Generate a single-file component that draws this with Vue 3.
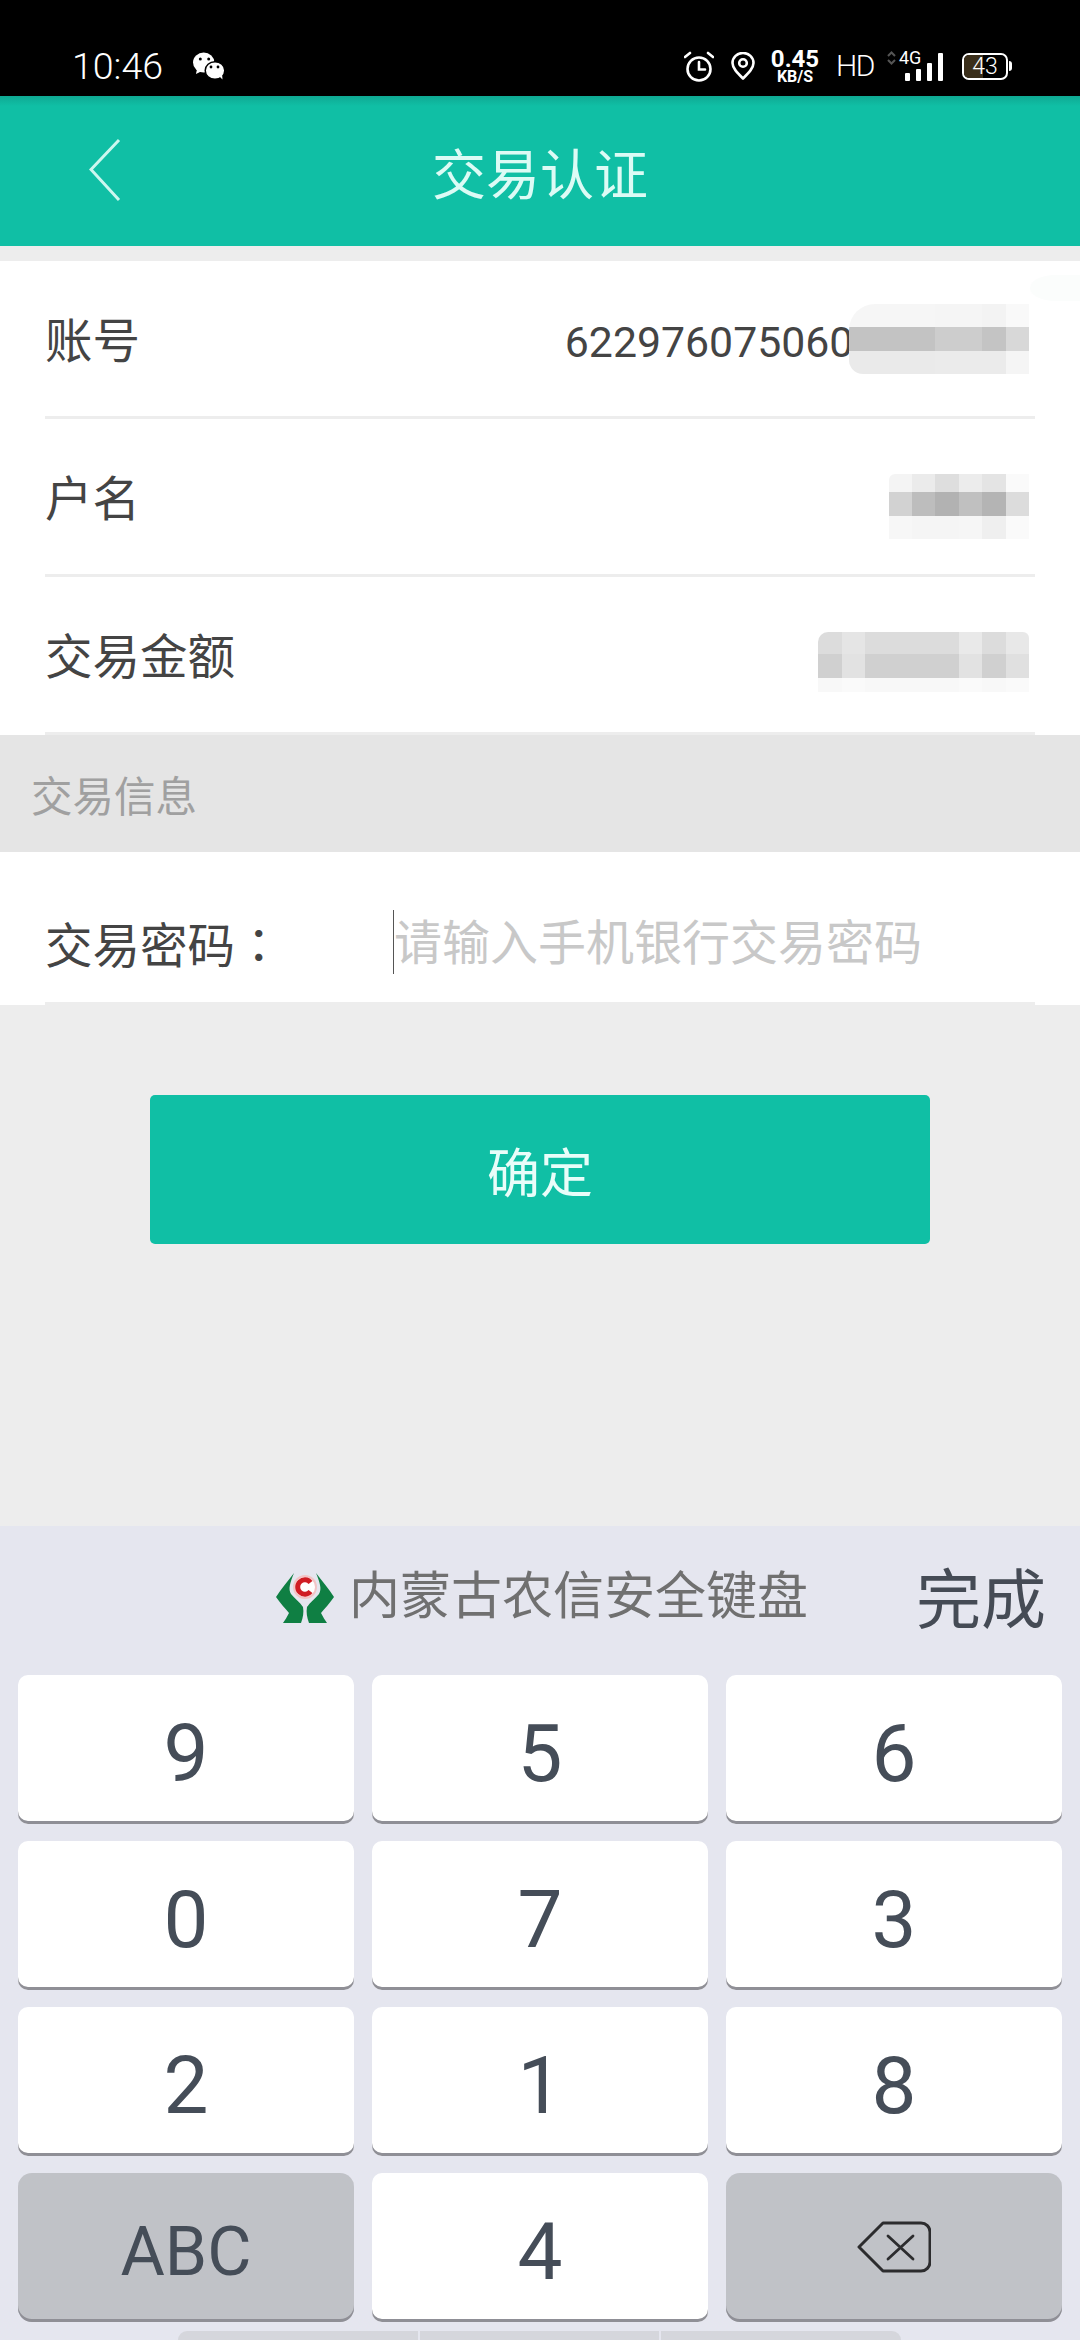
<template>
  <div class="page">
    <div class="status">
      <span class="time">10:46</span>
      <svg class="wechat" viewBox="0 0 32 28" width="32" height="28">
        <ellipse cx="10.700" cy="10.500" rx="10.700" ry="10" fill="#fff" />
        <path d="M4 17l-1 5 6-3z" fill="#fff" />
        <circle cx="7.300" cy="7" r="1.500" fill="#000" />
        <circle cx="15.700" cy="7" r="1.500" fill="#000" />
        <ellipse cx="22" cy="18.500" rx="9.800" ry="8.800" fill="#fff" stroke="#000" stroke-width="1.500" />
        <path d="M26 24l3.500 3.500-.5-6z" fill="#fff" />
        <circle cx="18" cy="15" r="1.400" fill="#000" />
        <circle cx="25" cy="15" r="1.400" fill="#000" />
      </svg>
      <div class="status-right">
        <svg viewBox="0 0 30 31" width="30" height="31" fill="none" stroke="#fff" stroke-width="2.600">
          <circle cx="15" cy="18" r="11.500" />
          <path d="M15 11v7.500h6M1 6l5-4M29 6l-5-4" stroke-linecap="round" />
        </svg>
        <svg class="pin" viewBox="0 0 24 28" width="24" height="28" fill="none" stroke="#fff" stroke-width="2.600">
          <path d="M12 26.500C6 20.500 1.500 16 1.500 11a10.500 10 0 0 1 21 0c0 5-4.500 9.500-10.500 15.500z" stroke-linejoin="round" />
          <circle cx="12" cy="11" r="3.800" />
        </svg>
        <div class="speed">
          <b>0.45</b>
          <b class="unit">KB/S</b>
        </div>
        <span class="hd">HD</span>
        <div class="signal">
          <svg class="arrows" viewBox="0 0 9 14" width="9" height="14" fill="none" stroke="#555" stroke-width="2">
            <path d="M1 5l3.500-3.500L8 5M1 9l3.500 3.500L8 9" />
          </svg>
          <span class="net">4G</span>
          <i v-for="b in bars" :key="b" class="bar" :style="{ height: b + 'px' }"></i>
        </div>
        <div class="battery">
          <div class="battery-fill"></div>
          <span>43</span>
        </div>
      </div>
    </div>

    <div class="header">
      <svg class="back" viewBox="0 0 32 64" width="32" height="64" fill="none" stroke="#ccf7ef" stroke-width="3">
        <path d="M30 2L2 31.500 30 62" />
      </svg>
      <span class="title">交易认证</span>
    </div>

    <div class="info">
      <div class="row">
        <span class="label">账号</span>
        <div class="value">
          <span class="account">622976075060</span>
          <div class="mosaic first">
            <i
              v-for="(cell, i) in mosaicOne"
              :key="i"
              :style="{ width: cell.w + 'px', background: 'linear-gradient(' + cell.c[0] + ' 0 33.300%,' + cell.c[1] + ' 33.300% 66.600%,' + cell.c[2] + ' 66.600%)' }"
            ></i>
          </div>
        </div>
        <div class="smudge"></div>
      </div>
      <div class="row">
        <span class="label">户名</span>
        <div class="value">
          <div class="mosaic second">
            <i
              v-for="(cell, i) in mosaicTwo"
              :key="i"
              :style="{ width: cell.w + 'px', background: 'linear-gradient(' + cell.c[0] + ' 0 28%,' + cell.c[1] + ' 28% 64%,' + cell.c[2] + ' 64%)' }"
            ></i>
          </div>
        </div>
      </div>
      <div class="row">
        <span class="label">交易金额</span>
        <div class="value">
          <div class="mosaic third">
            <i
              v-for="(cell, i) in mosaicThree"
              :key="i"
              :style="{ width: cell.w + 'px', background: 'linear-gradient(' + cell.c[0] + ' 0 37%,' + cell.c[1] + ' 37% 76%,' + cell.c[2] + ' 76%)' }"
            ></i>
          </div>
        </div>
      </div>
    </div>

    <div class="section">交易信息</div>

    <div class="password">
      <span class="label pwd-label">交易密码<span class="colon">：</span></span>
      <span class="caret"></span>
      <span class="placeholder">请输入手机银行交易密码</span>
    </div>

    <div class="confirm">确定</div>

    <div class="keyboard">
      <div class="kb-top">
        <svg class="logo" viewBox="0 0 58 50" width="58" height="50">
          <path d="M18 0C12 8 5 16 0 24c4 6 9 11 13 16-2 4-4 7-6 10h18c2-5 3-11 2-16-3-5-9-9-12-13-3-5-1-11 3-21z" fill="#0f7f43" />
          <path d="M40 0c6 8 13 16 18 24-4 6-9 11-13 16 2 4 4 7 6 10H33c-2-5-3-11-2-16 3-5 9-9 12-13 3-5 1-11-3-21z" fill="#0f7f43" />
          <circle cx="29" cy="14" r="12" fill="#f3c4c6" />
          <circle cx="29" cy="14" r="10" fill="#fff" />
          <path d="M34.500 9.500a7.200 7.200 0 1 0 0 9" fill="none" stroke="#d01c24" stroke-width="5" />
        </svg>
        <span class="kb-name">内蒙古农信安全键盘</span>
        <span class="done">完成</span>
      </div>
      <div class="keys">
        <div
          v-for="k in keys"
          :key="k"
          class="key"
          :class="{ special: k === 'ABC' || k === 'del', abc: k === 'ABC' }"
        >
          <svg v-if="k === 'del'" class="del" viewBox="0 0 74 52" width="74" height="52" fill="none" stroke="#2c2c2e" stroke-width="3">
            <path d="M26 2h38c5 0 9 4 9 9v30c0 5-4 9-9 9H26L2 26z" stroke-linejoin="round" />
            <path d="M31 15l25 23M56 15L31 38" stroke-width="2.800" stroke-linecap="round" />
          </svg>
          <template v-else>{{ k }}</template>
        </div>
      </div>
      <div class="nav-tabs">
        <i></i>
        <i></i>
        <i></i>
      </div>
    </div>
  </div>
</template>

<script setup>
const bars = [8, 12, 18, 28];
const keys = ["9", "5", "6", "0", "7", "3", "2", "1", "8", "ABC", "4", "del"];

// pixelated redaction blocks, each cell is one column (top, middle, bottom colour)
const mosaicOne = [
  { w: 86, c: ["#f6f6f6", "#c3c3c3", "#eaeaea"] },
  { w: 23.4, c: ["#f5f5f5", "#cdcdcd", "#ebebeb"] },
  { w: 23.4, c: ["#f5f5f5", "#cdcdcd", "#ebebeb"] },
  { w: 23.4, c: ["#f3f3f3", "#c4c4c4", "#ebebeb"] },
  { w: 23.4, c: ["#f9f9f9", "#d8d8d8", "#f5f5f5"] },
];
const mosaicTwo = [
  { w: 23.4, c: ["#f4f4f4", "#d2d2d2", "#f7f7f7"] },
  { w: 23.4, c: ["#ebebeb", "#bdbdbd", "#f5f5f5"] },
  { w: 23.4, c: ["#dedede", "#b2b2b2", "#f5f5f5"] },
  { w: 23.4, c: ["#ececec", "#c0c0c0", "#f6f6f6"] },
  { w: 23.4, c: ["#e4e4e4", "#b4b4b4", "#efefef"] },
  { w: 23.4, c: ["#fafafa", "#dcdcdc", "#fafafa"] },
];
const mosaicThree = [
  { w: 23.4, c: ["#dcdcdc", "#d0d0d0", "#f8f8f8"] },
  { w: 23.4, c: ["#e5e5e5", "#e2e2e2", "#fafafa"] },
  { w: 93.6, c: ["#dcdcdc", "#d0d0d0", "#f8f8f8"] },
  { w: 23.4, c: ["#e9e9e9", "#e2e2e2", "#fafafa"] },
  { w: 23.4, c: ["#dcdcdc", "#d0d0d0", "#f8f8f8"] },
  { w: 23.4, c: ["#e8e8e8", "#e0e0e0", "#fafafa"] },
];
</script>

<style>
html,
body {
  margin: 0;
  background: #ededed;
  overflow: hidden;
}
</style>

<style scoped>
.page {
  width: 1080px;
  height: 2340px;
  display: flex;
  flex-direction: column;
  background: #ededed;
  font-family: Roboto, "Noto Sans CJK SC", sans-serif;
  overflow: hidden;
}

.status {
  height: 96px;
  flex-shrink: 0;
  background: #000;
  color: #fff;
  display: flex;
  align-items: center;
  padding: 36px 69px 0 72px;
  box-sizing: border-box;
}

.time {
  font-size: 37.500px;
  font-weight: 300;
  line-height: 36px;
}

.wechat {
  margin-left: 30px;
}

.status-right {
  margin-left: auto;
  display: flex;
  align-items: center;
}

.pin {
  margin-left: 17px;
}

.speed {
  margin-left: 16px;
  width: 48px;
  display: flex;
  flex-direction: column;
  align-items: center;
  font-size: 24px;
  line-height: 20px;
}

.speed .unit {
  font-size: 16px;
  line-height: 15px;
}

.hd {
  margin-left: 17px;
  width: 36px;
  font-size: 30px;
  font-weight: 300;
  line-height: 32px;
  letter-spacing: -1.500px;
}

.signal {
  margin-left: 15px;
  width: 56px;
  height: 30px;
  position: relative;
  display: flex;
  align-items: flex-end;
  justify-content: flex-end;
  gap: 6px;
}

.arrows {
  position: absolute;
  left: 0;
  top: 0;
}

.net {
  position: absolute;
  left: 12px;
  top: -3px;
  font-size: 18px;
  line-height: 20px;
}

.bar {
  width: 5px;
  background: #fff;
  border-radius: 1px;
}

.battery {
  margin: 0 3px 0 19px;
  width: 46px;
  height: 27px;
  border: 2.500px solid #fff;
  border-radius: 7px;
  box-sizing: border-box;
  position: relative;
  display: flex;
  align-items: center;
  justify-content: center;
  font-size: 23px;
  font-weight: 300;
}

.battery::after {
  content: "";
  position: absolute;
  right: -6px;
  top: 6px;
  width: 3px;
  height: 10px;
  background: #fff;
  border-radius: 0 3px 3px 0;
}

.battery span {
  position: relative;
}

.battery-fill {
  position: absolute;
  left: 0;
  top: 0;
  bottom: 0;
  width: 19px;
  background: #3a2e1a;
  border-radius: 5px 0 0 5px;
}

.header {
  height: 150px;
  flex-shrink: 0;
  background: linear-gradient(#0fa993 0, #10bfa5 10px);
  position: relative;
  display: flex;
  align-items: center;
  justify-content: center;
}

.back {
  position: absolute;
  left: 89px;
  top: 42px;
}

.title {
  font-size: 54px;
  color: #dcfbf5;
}

.info {
  margin-top: 15px;
  background: #fff;
  padding: 0 45px;
  flex-shrink: 0;
}

.row {
  height: 158px;
  box-sizing: border-box;
  border-bottom: 3px solid #ededed;
  display: flex;
  align-items: center;
  justify-content: space-between;
  position: relative;
}

.label {
  font-size: 47.500px;
  color: #444;
  line-height: 1;
  padding-top: 8px;
}

.value {
  display: flex;
  align-items: center;
  padding-right: 6px;
}

.account {
  font-size: 42.800px;
  color: #444;
  margin-top: 6px;
}

.mosaic {
  display: flex;
  overflow: hidden;
}

.mosaic i {
  display: block;
  height: 100%;
  flex-shrink: 0;
}

.first {
  height: 70px;
  margin-left: -4px;
  border-radius: 26px 0 0 14px;
}

.second {
  height: 65px;
  margin-top: 19px;
  border-radius: 6px 0 0 0;
}

.third {
  height: 60px;
  margin-top: 14px;
  border-radius: 10px 6px 0 0;
}

.smudge {
  position: absolute;
  right: -45px;
  top: 14px;
  width: 50px;
  height: 26px;
  border-radius: 50% 0 0 50%;
  background: #fbfdfc;
}

.section {
  height: 117px;
  flex-shrink: 0;
  background: #e5e5e5;
  color: #a0a0a0;
  font-size: 41.500px;
  display: flex;
  align-items: center;
  padding-left: 31px;
}

.password {
  height: 153px;
  flex-shrink: 0;
  background: #fff;
  box-sizing: border-box;
  display: flex;
  align-items: center;
  padding: 26px 0 0 45px;
  position: relative;
}

.password::after {
  content: "";
  position: absolute;
  left: 45px;
  right: 45px;
  bottom: 0;
  height: 3px;
  background: #ededed;
}

.pwd-label {
  width: 348px;
  flex-shrink: 0;
}

.colon {
  font-family: "Noto Sans CJK TC", sans-serif;
}

.caret {
  width: 1px;
  height: 64px;
  background: #555;
  flex-shrink: 0;
}

.placeholder {
  font-size: 48px;
  color: #c8c8c8;
  line-height: 1;
  padding-top: 5px;
}

.confirm {
  width: 780px;
  height: 149px;
  margin: 90px 0 0 150px;
  flex-shrink: 0;
  border-radius: 5px;
  background: #10bfa5;
  color: #e8fdf9;
  font-size: 53px;
  display: flex;
  align-items: center;
  justify-content: center;
}

.keyboard {
  margin-top: auto;
  height: 814px;
  flex-shrink: 0;
  background: #e5e6ef;
  display: flex;
  flex-direction: column;
}

.kb-top {
  height: 149px;
  flex-shrink: 0;
  display: flex;
  align-items: center;
  padding: 0 34px 0 276px;
}

.logo {
  margin-top: -6px;
  flex-shrink: 0;
}

.kb-name {
  margin: -18px 0 0 15px;
  font-size: 51px;
  color: #707070;
  filter: blur(0.5px);
}

.done {
  margin: -12px 0 0 auto;
  font-size: 65px;
  color: #454b55;
}

.keys {
  display: grid;
  grid-template-columns: repeat(3, 336px);
  grid-auto-rows: 149px;
  gap: 17px 18px;
  padding: 0 18px;
}

.key {
  background: #fff;
  border-radius: 10px;
  box-shadow: inset 0 -3px 0 #8f8f96;
  color: #454d58;
  font-size: 80px;
  display: flex;
  align-items: center;
  justify-content: center;
  padding-top: 9px;
  box-sizing: border-box;
}

.special {
  background: #c0c2c7;
  border-radius: 14px;
}

.abc {
  font-size: 68px;
}

.del {
  margin-top: -11px;
}

.nav-tabs {
  margin: 9px 0 0 178px;
  width: 723px;
  height: 12px;
  display: flex;
  gap: 2px;
  border-radius: 10px 10px 0 0;
  overflow: hidden;
}

.nav-tabs i {
  flex: 1;
  background: #d5d6dc;
}
</style>
